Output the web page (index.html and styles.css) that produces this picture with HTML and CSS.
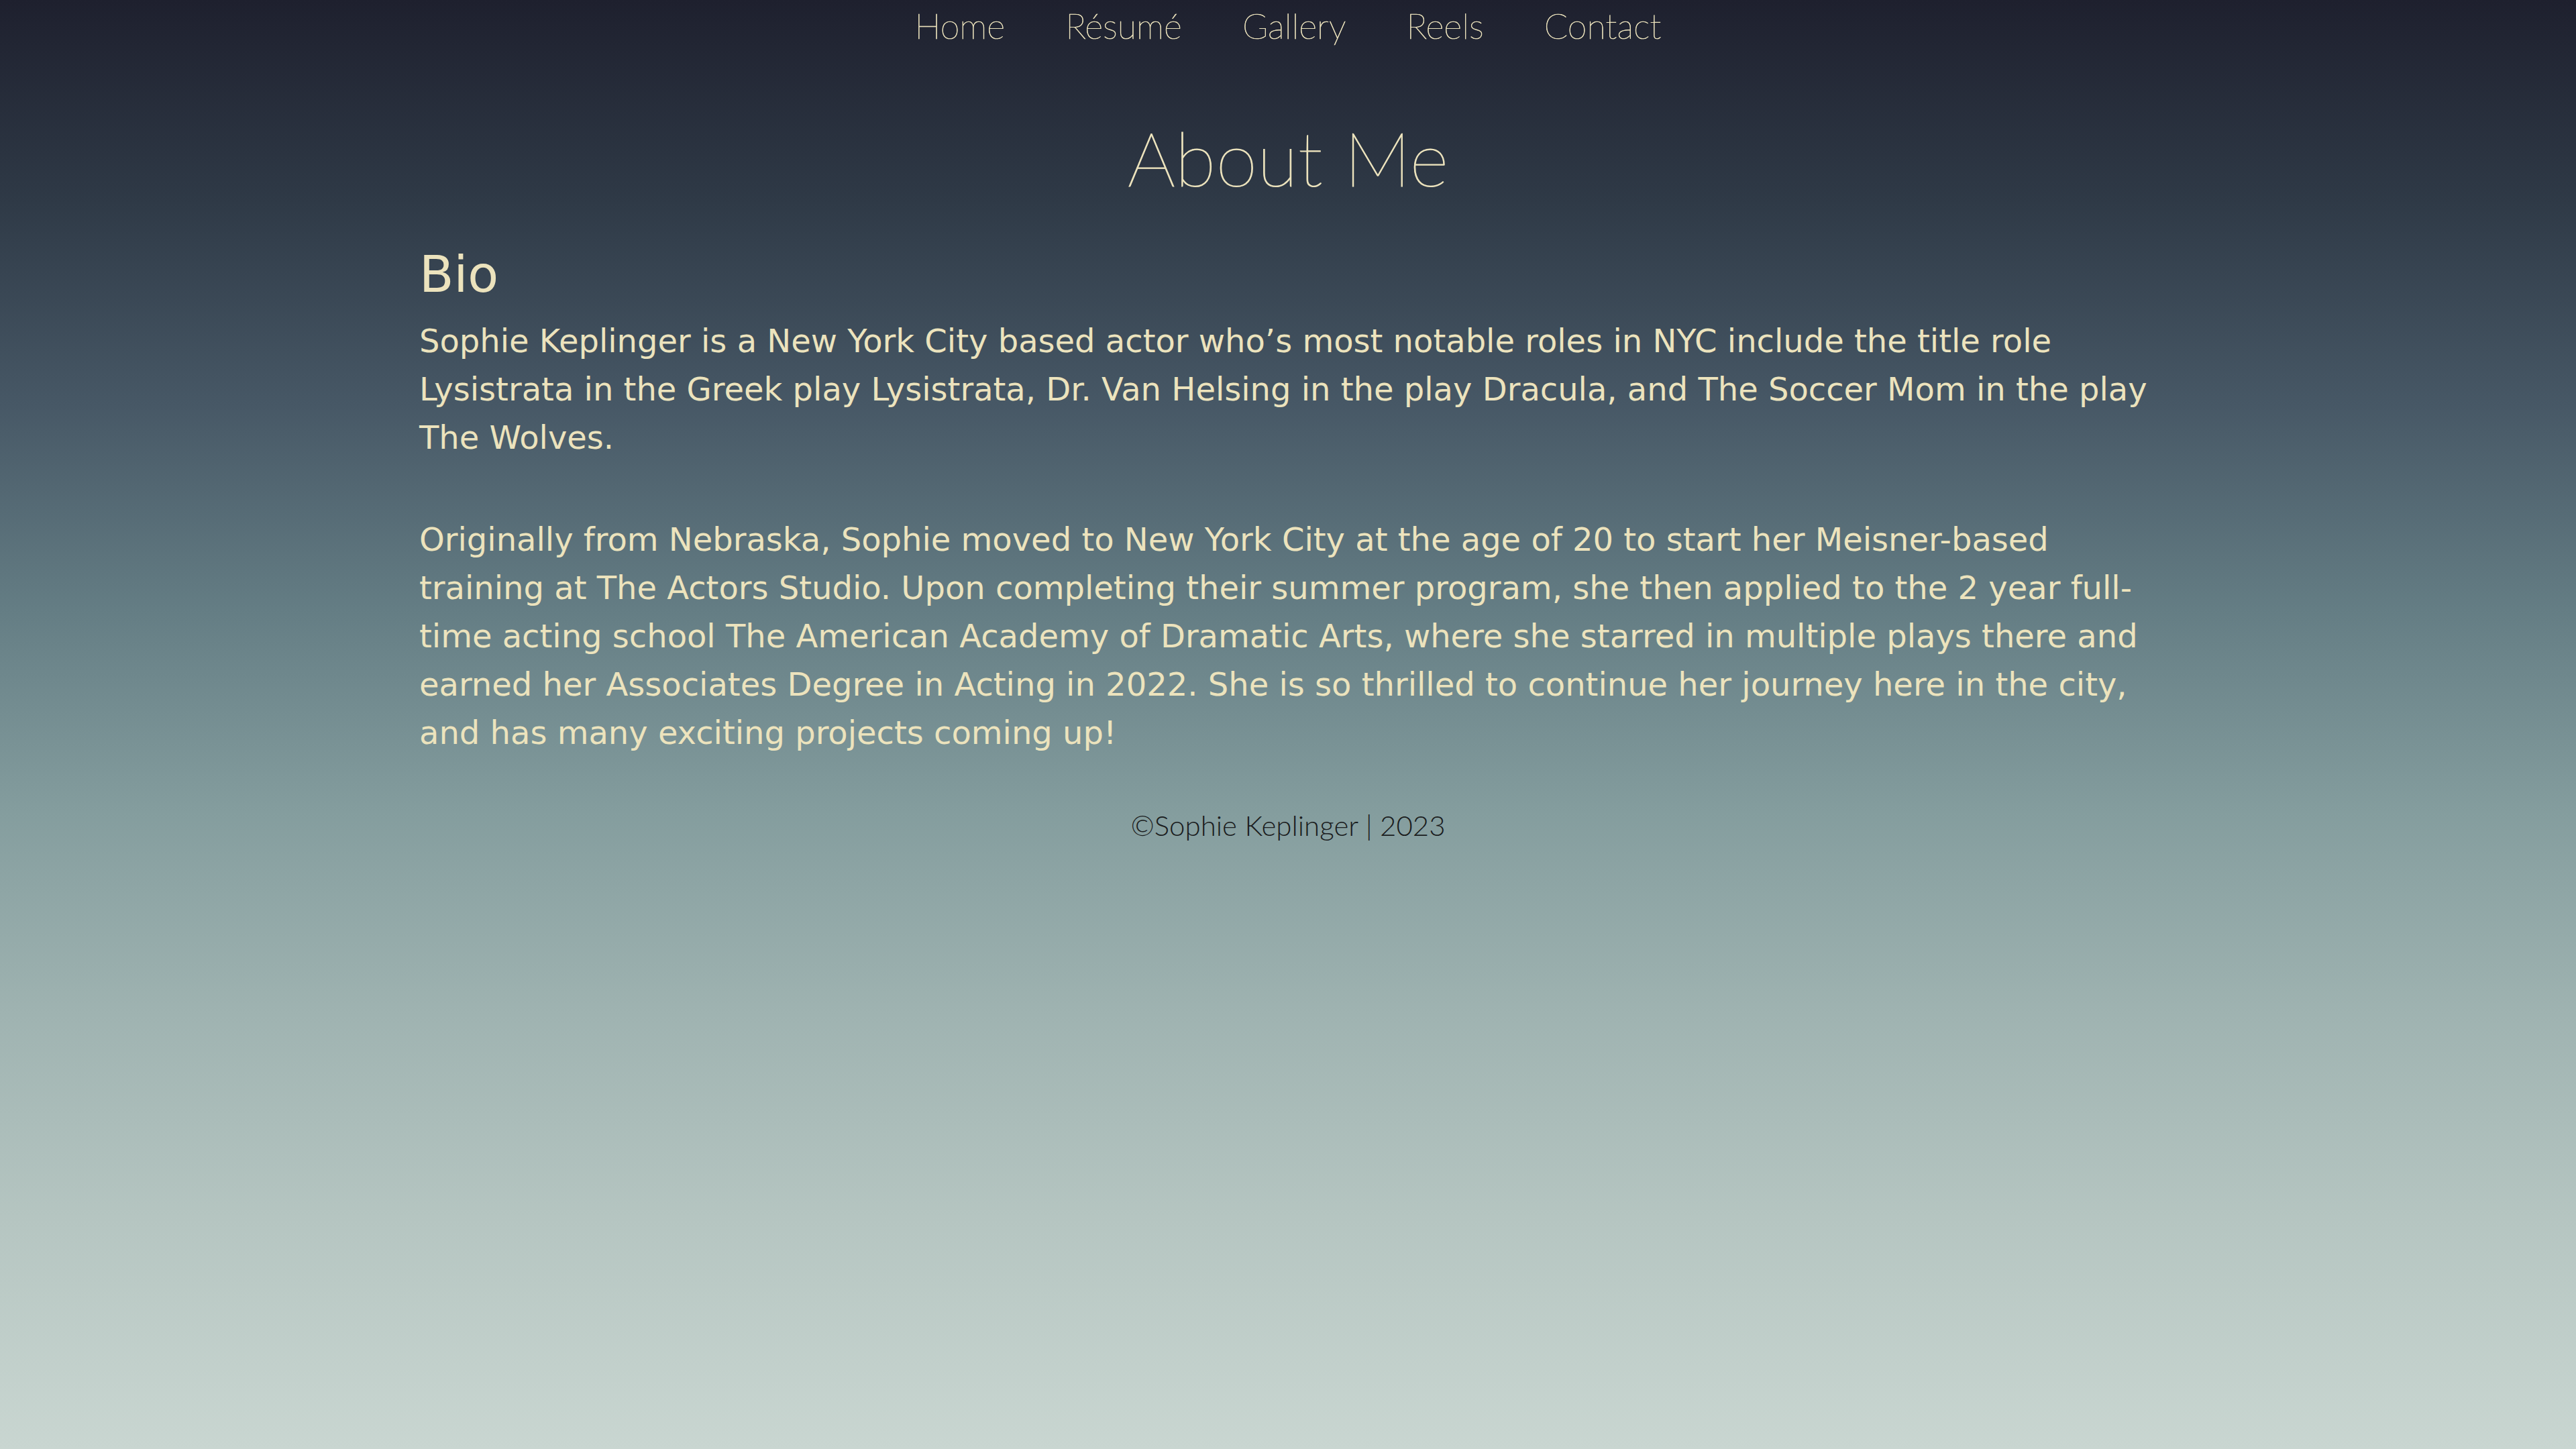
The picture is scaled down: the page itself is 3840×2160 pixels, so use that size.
FILE: index.html
```html
<!DOCTYPE html>
<html lang="en">
<head>
<meta charset="utf-8">
<title>About Me | Sophie Keplinger</title>
<link rel="stylesheet" href="styles.css">
</head>
<body>
<nav class="nav">
  <a class="nav-link" href="#">Home</a>
  <a class="nav-link" href="#">Résumé</a>
  <a class="nav-link" href="#">Gallery</a>
  <a class="nav-link" href="#">Reels</a>
  <a class="nav-link" href="#">Contact</a>
</nav>
<main class="content">
  <h1 class="title">About Me</h1>
  <section class="bio">
    <h2 class="bio-heading">Bio</h2>
    <p class="bio-text">Sophie Keplinger is a New York City based actor who’s most notable roles in NYC include the title role Lysistrata in the Greek play Lysistrata, Dr. Van Helsing in the play Dracula, and The Soccer Mom in the play The Wolves.</p>
    <p class="bio-text bio-text--second">Originally from Nebraska, Sophie moved to New York City at the age of 20 to start her Meisner-based training at The Actors Studio. Upon completing their summer program, she then applied to the 2 year full-time acting school The American Academy of Dramatic Arts, where she starred in multiple plays there and earned her Associates Degree in Acting in 2022. She is so thrilled to continue her journey here in the city, and has many exciting projects coming up!</p>
  </section>
</main>
<footer class="footer">©Sophie Keplinger | 2023</footer>
</body>
</html>
```

FILE: styles.css
```css
html {
  min-height: 100%;
}

body {
  margin: 0;
  min-height: 2160px;
  background: linear-gradient(180deg, #1e202e 0%, #2f3a47 14%, #475866 28%, #647d84 42%, #849d9e 56%, #9fb3b1 70%, #b5c5c1 84%, #c9d6d1 100%);
  color: #ece3bd;
  font-family: "DejaVu Sans", sans-serif;
}

.nav {
  display: flex;
  justify-content: center;
  gap: 90px;
  height: 76px;
}

.nav-link {
  font-family: Lato, "Inter", sans-serif;
  font-weight: 100;
  font-size: 52px;
  line-height: 76px;
  color: #ece3bd;
  -webkit-text-stroke: 0.7px #ece3bd;
  text-decoration: none;
}

.content {
  width: 2590px;
  margin: 0 auto;
}

.title {
  margin: 92px 0 0;
  text-align: center;
  font-family: Lato, "Inter", sans-serif;
  font-weight: 100;
  font-size: 112px;
  line-height: 134px;
  color: #ece3bd;
  -webkit-text-stroke: 1.2px #ece3bd;
}

.bio-heading {
  margin: 59px 0 0;
  font-family: "DejaVu Sans", sans-serif;
  font-weight: normal;
  font-size: 75px;
  line-height: 96px;
}

.bio-text {
  margin: 15px 0 0;
  font-size: 48px;
  line-height: 72px;
}

.bio-text--second {
  margin-top: 80px;
}

.footer {
  margin-top: 76px;
  text-align: center;
  font-family: Lato, "Inter", sans-serif;
  font-weight: 300;
  font-size: 42px;
  line-height: 52px;
  color: #1a1c1d;
}
```
